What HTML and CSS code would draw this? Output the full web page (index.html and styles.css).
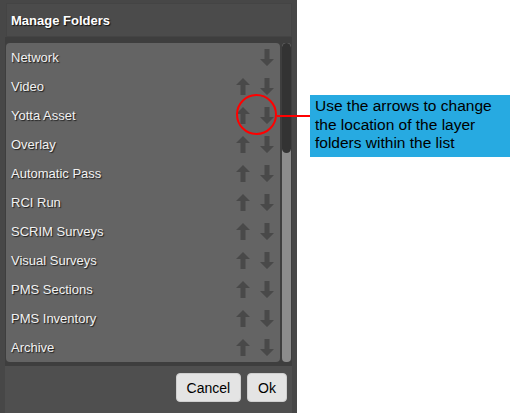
FILE: index.html
```html
<!DOCTYPE html>
<html>
<head>
<meta charset="utf-8">
<link rel="stylesheet" href="styles.css">
</head>
<body>
<div class="page">
  <div class="dialog">
    <div class="header">Manage Folders</div>
    <div class="body">
      <div class="list-wrap">
        <ul class="list">
          <li class="row"><span class="name">Network</span><span class="arrows"><span class="slot"></span><svg class="arr" viewBox="0 0 14 17"><path d="M4.5 0H9.5V10H14L7 17L0 10H4.5Z"/></svg></span></li>
          <li class="row"><span class="name">Video</span><span class="arrows"><svg class="arr" viewBox="0 0 14 17"><path d="M7 0L14 7H9.5V17H4.5V7H0Z"/></svg><svg class="arr" viewBox="0 0 14 17"><path d="M4.5 0H9.5V10H14L7 17L0 10H4.5Z"/></svg></span></li>
          <li class="row"><span class="name">Yotta Asset</span><span class="arrows"><svg class="arr" viewBox="0 0 14 17"><path d="M7 0L14 7H9.5V17H4.5V7H0Z"/></svg><svg class="arr" viewBox="0 0 14 17"><path d="M4.5 0H9.5V10H14L7 17L0 10H4.5Z"/></svg></span></li>
          <li class="row"><span class="name">Overlay</span><span class="arrows"><svg class="arr" viewBox="0 0 14 17"><path d="M7 0L14 7H9.5V17H4.5V7H0Z"/></svg><svg class="arr" viewBox="0 0 14 17"><path d="M4.5 0H9.5V10H14L7 17L0 10H4.5Z"/></svg></span></li>
          <li class="row"><span class="name">Automatic Pass</span><span class="arrows"><svg class="arr" viewBox="0 0 14 17"><path d="M7 0L14 7H9.5V17H4.5V7H0Z"/></svg><svg class="arr" viewBox="0 0 14 17"><path d="M4.5 0H9.5V10H14L7 17L0 10H4.5Z"/></svg></span></li>
          <li class="row"><span class="name">RCI Run</span><span class="arrows"><svg class="arr" viewBox="0 0 14 17"><path d="M7 0L14 7H9.5V17H4.5V7H0Z"/></svg><svg class="arr" viewBox="0 0 14 17"><path d="M4.5 0H9.5V10H14L7 17L0 10H4.5Z"/></svg></span></li>
          <li class="row"><span class="name">SCRIM Surveys</span><span class="arrows"><svg class="arr" viewBox="0 0 14 17"><path d="M7 0L14 7H9.5V17H4.5V7H0Z"/></svg><svg class="arr" viewBox="0 0 14 17"><path d="M4.5 0H9.5V10H14L7 17L0 10H4.5Z"/></svg></span></li>
          <li class="row"><span class="name">Visual Surveys</span><span class="arrows"><svg class="arr" viewBox="0 0 14 17"><path d="M7 0L14 7H9.5V17H4.5V7H0Z"/></svg><svg class="arr" viewBox="0 0 14 17"><path d="M4.5 0H9.5V10H14L7 17L0 10H4.5Z"/></svg></span></li>
          <li class="row"><span class="name">PMS Sections</span><span class="arrows"><svg class="arr" viewBox="0 0 14 17"><path d="M7 0L14 7H9.5V17H4.5V7H0Z"/></svg><svg class="arr" viewBox="0 0 14 17"><path d="M4.5 0H9.5V10H14L7 17L0 10H4.5Z"/></svg></span></li>
          <li class="row"><span class="name">PMS Inventory</span><span class="arrows"><svg class="arr" viewBox="0 0 14 17"><path d="M7 0L14 7H9.5V17H4.5V7H0Z"/></svg><svg class="arr" viewBox="0 0 14 17"><path d="M4.5 0H9.5V10H14L7 17L0 10H4.5Z"/></svg></span></li>
          <li class="row"><span class="name">Archive</span><span class="arrows"><svg class="arr" viewBox="0 0 14 17"><path d="M7 0L14 7H9.5V17H4.5V7H0Z"/></svg><svg class="arr" viewBox="0 0 14 17"><path d="M4.5 0H9.5V10H14L7 17L0 10H4.5Z"/></svg></span></li>
        </ul>
        <div class="scrollbar"><div class="thumb"></div></div>
        <div class="highlight"></div>
      </div>
      <div class="footer">
        <button class="btn">Cancel</button>
        <button class="btn">Ok</button>
      </div>
    </div>
  </div>
  <div class="callout-line"></div>
  <div class="callout">Use the arrows to change the location of the layer folders within the list</div>
</div>
</body>
</html>
```
FILE: styles.css
```css
html, body {
  margin: 0;
  padding: 0;
  background: #ffffff;
  font-family: "Liberation Sans", Arial, sans-serif;
}
.page {
  position: relative;
  width: 512px;
  height: 413px;
  overflow: hidden;
}
.dialog {
  width: 287px;
  height: 413px;
  background: #474747;
  padding: 3px 5px 0 5px;
  display: flex;
  flex-direction: column;
}
.header {
  height: 34px;
  flex: none;
  background: #4b4b4b;
  border: 1px solid #444;
  box-sizing: border-box;
  margin: 0 0 0 1px;
  padding: 0 0 0 4px;
  display: flex;
  align-items: center;
  color: #ffffff;
  font-weight: bold;
  font-size: 13px;
  text-shadow: 1px 1px 1px #111;
}
.body {
  flex: 1;
  background: #3e3e3e;
  padding: 6px 0 0 0;
  display: flex;
  flex-direction: column;
}
.list-wrap {
  position: relative;
  display: flex;
  height: 319px;
  flex: none;
}
.list {
  list-style: none;
  margin: 0 0 0 1px;
  padding: 0;
  width: 274px;
  background: #646464;
  border-radius: 4px;
}
.row {
  height: 29px;
  display: flex;
  align-items: center;
  justify-content: space-between;
  padding: 0 6px 0 5px;
}
.name {
  color: #f2f2f2;
  font-size: 13px;
  text-shadow: 1px 1px 1px #1e1e1e;
}
.arrows {
  display: flex;
  gap: 10px;
  align-items: center;
}
.slot {
  width: 14px;
  height: 17px;
}
.arr {
  width: 14px;
  height: 17px;
  fill: #494949;
  display: block;
}
.scrollbar {
  margin-left: 2px;
  width: 9px;
  background: #8c8c8c;
  border-radius: 4px;
  position: relative;
}
.thumb {
  height: 110px;
  background: #333333;
  border-radius: 5px;
}
.highlight {
  position: absolute;
  left: 231px;
  top: 51px;
  width: 37px;
  height: 37px;
  border: 2px solid #ff0000;
  border-radius: 50%;
}
.footer {
  flex: 1;
  background: #4f4f4f;
  margin-top: 4px;
  display: flex;
  justify-content: flex-end;
  align-items: flex-start;
  gap: 6px;
  padding: 7px 5px 0 0;
}
.btn {
  font-family: "Liberation Sans", Arial, sans-serif;
  font-size: 14px;
  color: #000;
  background: #e4e4e4;
  border: 1px solid #cfcfcf;
  border-radius: 4px;
  height: 29px;
  padding: 0 10px;
}
.callout-line {
  position: absolute;
  left: 277px;
  top: 115px;
  width: 33px;
  height: 2px;
  background: #ff0000;
}
.callout {
  position: absolute;
  left: 310px;
  top: 95px;
  width: 200px;
  height: 62px;
  background: #27aae1;
  color: #000;
  font-size: 15.5px;
  line-height: 18.5px;
  padding: 2px 0 0 5px;
  box-sizing: border-box;
}
```
